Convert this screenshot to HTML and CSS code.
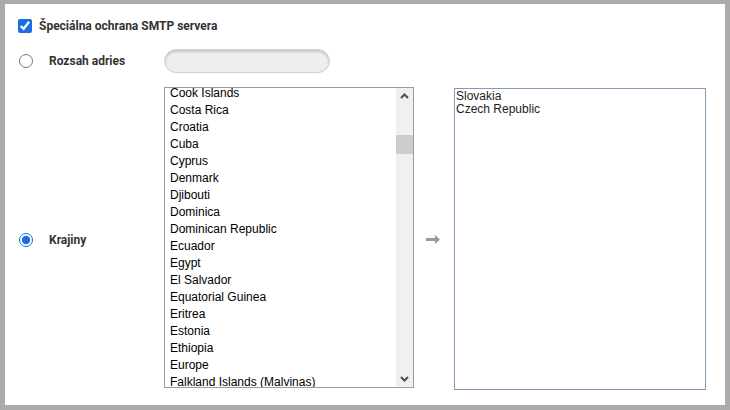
FILE: index.html
```html
<!DOCTYPE html>
<html lang="sk">
<head>
<meta charset="UTF-8">
<title>Špeciálna ochrana SMTP servera</title>
<link rel="stylesheet" href="styles.css">
</head>
<body>
<div class="panel">
  <div class="row row-check">
    <input type="checkbox" id="smtp" checked>
    <label for="smtp" class="check-label">Špeciálna ochrana SMTP servera</label>
  </div>

  <div class="row row-range">
    <div class="opt">
      <input type="radio" name="mode" id="range">
      <label for="range">Rozsah adries</label>
    </div>
    <input type="text" class="range-input">
  </div>

  <div class="row row-countries">
    <div class="opt opt-countries">
      <input type="radio" name="mode" id="countries" checked>
      <label for="countries">Krajiny</label>
    </div>
    <div class="listbox">
      <ul class="items">
        <li>Cook Islands</li>
        <li>Costa Rica</li>
        <li>Croatia</li>
        <li>Cuba</li>
        <li>Cyprus</li>
        <li>Denmark</li>
        <li>Djibouti</li>
        <li>Dominica</li>
        <li>Dominican Republic</li>
        <li>Ecuador</li>
        <li>Egypt</li>
        <li>El Salvador</li>
        <li>Equatorial Guinea</li>
        <li>Eritrea</li>
        <li>Estonia</li>
        <li>Ethiopia</li>
        <li>Europe</li>
        <li>Falkland Islands (Malvinas)</li>
      </ul>
      <div class="scrollbar">
        <svg class="sb-arrow" width="17" height="17" viewBox="0 0 17 17"><path d="M5 10 L8.5 6.5 L12 10" fill="none" stroke="#505050" stroke-width="2"/></svg>
        <div class="sb-track"><div class="sb-thumb"></div></div>
        <svg class="sb-arrow" width="17" height="17" viewBox="0 0 17 17"><path d="M5 7 L8.5 10.5 L12 7" fill="none" stroke="#505050" stroke-width="2"/></svg>
      </div>
    </div>
    <div class="move">
      <svg width="15" height="9" viewBox="0 0 15 9"><path d="M0 3 H9 V0 L14 4.5 L9 9 V6 H0 Z" fill="#9a9a9a"/></svg>
    </div>
    <div class="selected">
      <div>Slovakia</div>
      <div>Czech Republic</div>
    </div>
  </div>
</div>
</body>
</html>
```

FILE: styles.css
```css
html, body {
  margin: 0;
  padding: 0;
}
body {
  background-color: #ababab;
  font-family: 'Liberation Sans', Arial, sans-serif;
  width: 730px;
  height: 410px;
  overflow: hidden;
}
.panel {
  margin: 4px 5px 0 5px;
  width: 720px;
  height: 401px;
  background-color: #fff;
  box-sizing: border-box;
  padding: 15px 0 0 13px;
}
.row {
  display: flex;
  align-items: center;
}
.row-check input {
  margin: 0;
  width: 14px;
  height: 14px;
  accent-color: #1a6fe0;
}
.check-label {
  margin-left: 7px;
  font-family: Roboto, 'Liberation Sans', sans-serif;
  font-weight: bold;
  font-size: 12px;
  color: #333;
}
.row-range {
  margin-top: 16px;
}
.opt {
  width: 146px;
  display: flex;
  align-items: center;
  padding-left: 1px;
  box-sizing: border-box;
}
.opt input {
  margin: 0;
  width: 14px;
  height: 14px;
  accent-color: #1a6fe0;
}
.opt label {
  margin-left: 16px;
  font-family: Roboto, 'Liberation Sans', sans-serif;
  font-weight: bold;
  font-size: 12px;
  color: #333;
}
.range-input {
  width: 166px;
  height: 24px;
  box-sizing: border-box;
  border: 1px solid #cfcfcf;
  border-radius: 12px;
  background-color: #efefef;
  box-shadow: inset 0 2px 3px rgba(0, 0, 0, 0.18);
  margin: 0;
  padding: 0 8px;
}
.row-countries {
  margin-top: 14px;
  align-items: flex-start;
}
.opt-countries {
  height: 301px;
  padding-top: 5px;
}
.listbox {
  width: 250px;
  height: 301px;
  box-sizing: border-box;
  border: 1px solid #9c9c9c;
  display: flex;
  overflow: hidden;
}
.items {
  list-style: none;
  margin: -3px 0 0 0;
  padding: 0;
  flex: 1;
}
.items li {
  height: 17px;
  line-height: 17px;
  padding-left: 5px;
  font-size: 12px;
  color: #000;
  white-space: nowrap;
}
.scrollbar {
  width: 17px;
  background-color: #f0f0f0;
  display: flex;
  flex-direction: column;
}
.sb-arrow {
  display: block;
}
.sb-track {
  flex: 1;
}
.sb-thumb {
  margin-top: 30px;
  height: 19px;
  background-color: #cdcdcd;
}
.move {
  width: 40px;
  height: 301px;
  display: flex;
  align-items: center;
  justify-content: center;
}
.move svg {
  margin-left: -1px;
  margin-top: 3px;
}
.selected {
  margin-top: 1px;
  width: 252px;
  height: 302px;
  box-sizing: border-box;
  border: 1px solid #7f9db9;
  padding: 1px 0 0 1px;
  font-size: 12px;
  line-height: 13px;
  color: #222;
}
```
